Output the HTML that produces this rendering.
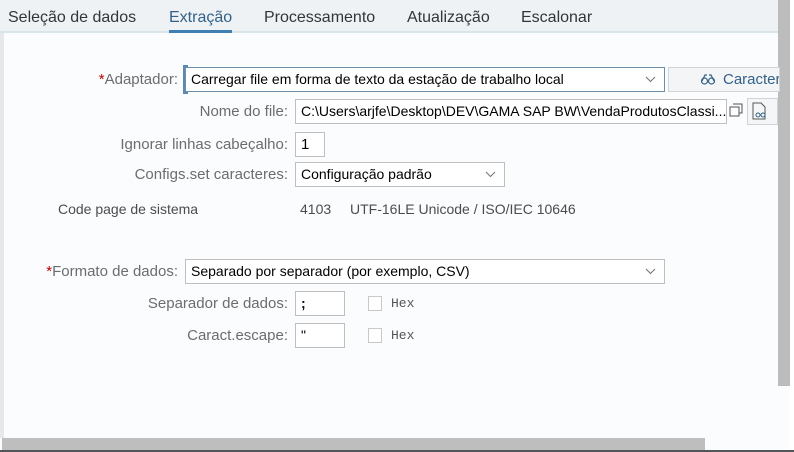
<!DOCTYPE html>
<html><head><style>
*{margin:0;padding:0;box-sizing:border-box}
body{width:794px;height:452px;overflow:hidden;background:#fbfcfe;font-family:"Liberation Sans",Arial,sans-serif;position:relative;color:#32363a}
.a{position:absolute;white-space:nowrap}
.tab{font-size:16px;top:9px;color:#32363a}
.lbl{font-size:15px;color:#6a6d70;text-align:right}
.box{position:absolute;border:1px solid #bfbfbf;background:#fff;font-size:14px;color:#000;padding:3px 5px;line-height:17px;white-space:nowrap;overflow:hidden}
.chev{position:absolute;right:8px;top:8px}
.cb{position:absolute;width:14px;height:15px;border:1px solid #c8c8c8;background:#fff}
.hex{font-size:13px;color:#555;font-family:"Liberation Mono",monospace}
</style></head><body>
<div class="a" style="left:0;top:0;width:778px;height:33px;background:#eef2f5;border-bottom:2px solid #d9e3ea"></div>
<div class="a" style="left:0;top:33px;width:4px;height:405px;background:#e6e9ec"></div>
<div class="a tab" style="left:8px">Seleção de dados</div>
<div class="a tab" style="left:169px;color:#346187">Extração</div>
<div class="a" style="left:169px;top:30px;width:63px;height:3px;background:#3f7fb1"></div>
<div class="a tab" style="left:264px">Processamento</div>
<div class="a tab" style="left:407px">Atualização</div>
<div class="a tab" style="left:521px">Escalonar</div>
<div class="a" style="left:778px;top:0;width:12px;height:386px;background:#bcbcbc"></div>
<div class="a" style="left:790px;top:0;width:4px;height:452px;background:#fff"></div>

<div class="a lbl" style="right:616px;top:71px"><span style="color:#b00">*</span>Adaptador:</div>
<div class="box" style="left:185px;top:67px;width:480px;height:25px;border-color:#6f8ea8">Carregar file em forma de texto da estação de trabalho local<svg class="chev" width="11" height="7" viewBox="0 0 11 7"><path d="M1 1l4.5 4.5L10 1" fill="none" stroke="#777" stroke-width="1.1"/></svg></div>
<div class="a" style="left:183px;top:65px;width:5px;height:29px;border:2px solid #5b89b3;border-right:none"></div>
<div class="box" style="left:668px;top:67px;width:112px;height:25px;background:#f3f5f7;border-color:#d0d5da;color:#346187;padding-left:54px;font-size:15px">Caracter</div>
<svg class="a" style="left:700px;top:73px" width="16" height="12" viewBox="0 0 16 12"><path d="M2 8L5 2h2M14 8L11 2H9" fill="none" stroke="#346187" stroke-width="1.2"/><circle cx="4.5" cy="8" r="3" fill="none" stroke="#346187" stroke-width="1.2"/><circle cx="11.5" cy="8" r="3" fill="none" stroke="#346187" stroke-width="1.2"/></svg>

<div class="a lbl" style="right:506px;top:103px">Nome do file:</div>
<div class="box" style="left:295px;top:99px;width:432px;height:25px">C:\Users\arjfe\Desktop\DEV\GAMA SAP BW\VendaProdutosClassi...</div>
<svg class="a" style="left:729px;top:103px" width="14" height="14" viewBox="0 0 14 14"><path d="M4 1h9v9H10M1 4h9v9H1z" fill="none" stroke="#555"/></svg>
<div class="box" style="left:747px;top:98px;width:31px;height:27px;background:#f5f6f7;border-color:#cfd3d7"></div>
<svg class="a" style="left:752px;top:102px" width="16" height="18" viewBox="0 0 16 18"><path d="M1 1h8l4 4v12H1z" fill="none" stroke="#555"/><circle cx="6" cy="13" r="2" fill="none" stroke="#346187"/><circle cx="11" cy="13" r="2" fill="none" stroke="#346187"/></svg>

<div class="a lbl" style="right:506px;top:136px">Ignorar linhas cabeçalho:</div>
<div class="box" style="left:295px;top:132px;width:30px;height:25px;font-size:15px">1</div>
<div class="a lbl" style="right:506px;top:166px">Configs.set caracteres:</div>
<div class="box" style="left:295px;top:162px;width:210px;height:25px">Configuração padrão<svg class="chev" width="11" height="7" viewBox="0 0 11 7"><path d="M1 1l4.5 4.5L10 1" fill="none" stroke="#777" stroke-width="1.1"/></svg></div>
<div class="a" style="left:58px;top:201px;font-size:14px;color:#4a4d50">Code page de sistema</div>
<div class="a" style="left:300px;top:201px;font-size:14px;color:#4a4d50">4103</div>
<div class="a" style="left:350px;top:201px;font-size:14px;color:#4a4d50">UTF-16LE Unicode / ISO/IEC 10646</div>

<div class="a lbl" style="right:616px;top:263px"><span style="color:#b00">*</span>Formato de dados:</div>
<div class="box" style="left:185px;top:259px;width:480px;height:25px">Separado por separador (por exemplo, CSV)<svg class="chev" width="11" height="7" viewBox="0 0 11 7"><path d="M1 1l4.5 4.5L10 1" fill="none" stroke="#777" stroke-width="1.1"/></svg></div>
<div class="a lbl" style="right:506px;top:295px">Separador de dados:</div>
<div class="box" style="left:295px;top:291px;width:50px;height:25px;font-weight:bold">;</div>
<div class="cb" style="left:368px;top:296px"></div>
<div class="a hex" style="left:391px;top:296px">Hex</div>
<div class="a lbl" style="right:506px;top:327px">Caract.escape:</div>
<div class="box" style="left:295px;top:323px;width:50px;height:25px">"</div>
<div class="cb" style="left:368px;top:328px"></div>
<div class="a hex" style="left:391px;top:328px">Hex</div>

<div class="a" style="left:2px;top:438px;width:703px;height:12px;background:#bebebe"></div>
<div class="a" style="left:0;top:450px;width:794px;height:2px;background:#52565a"></div>
</body></html>
